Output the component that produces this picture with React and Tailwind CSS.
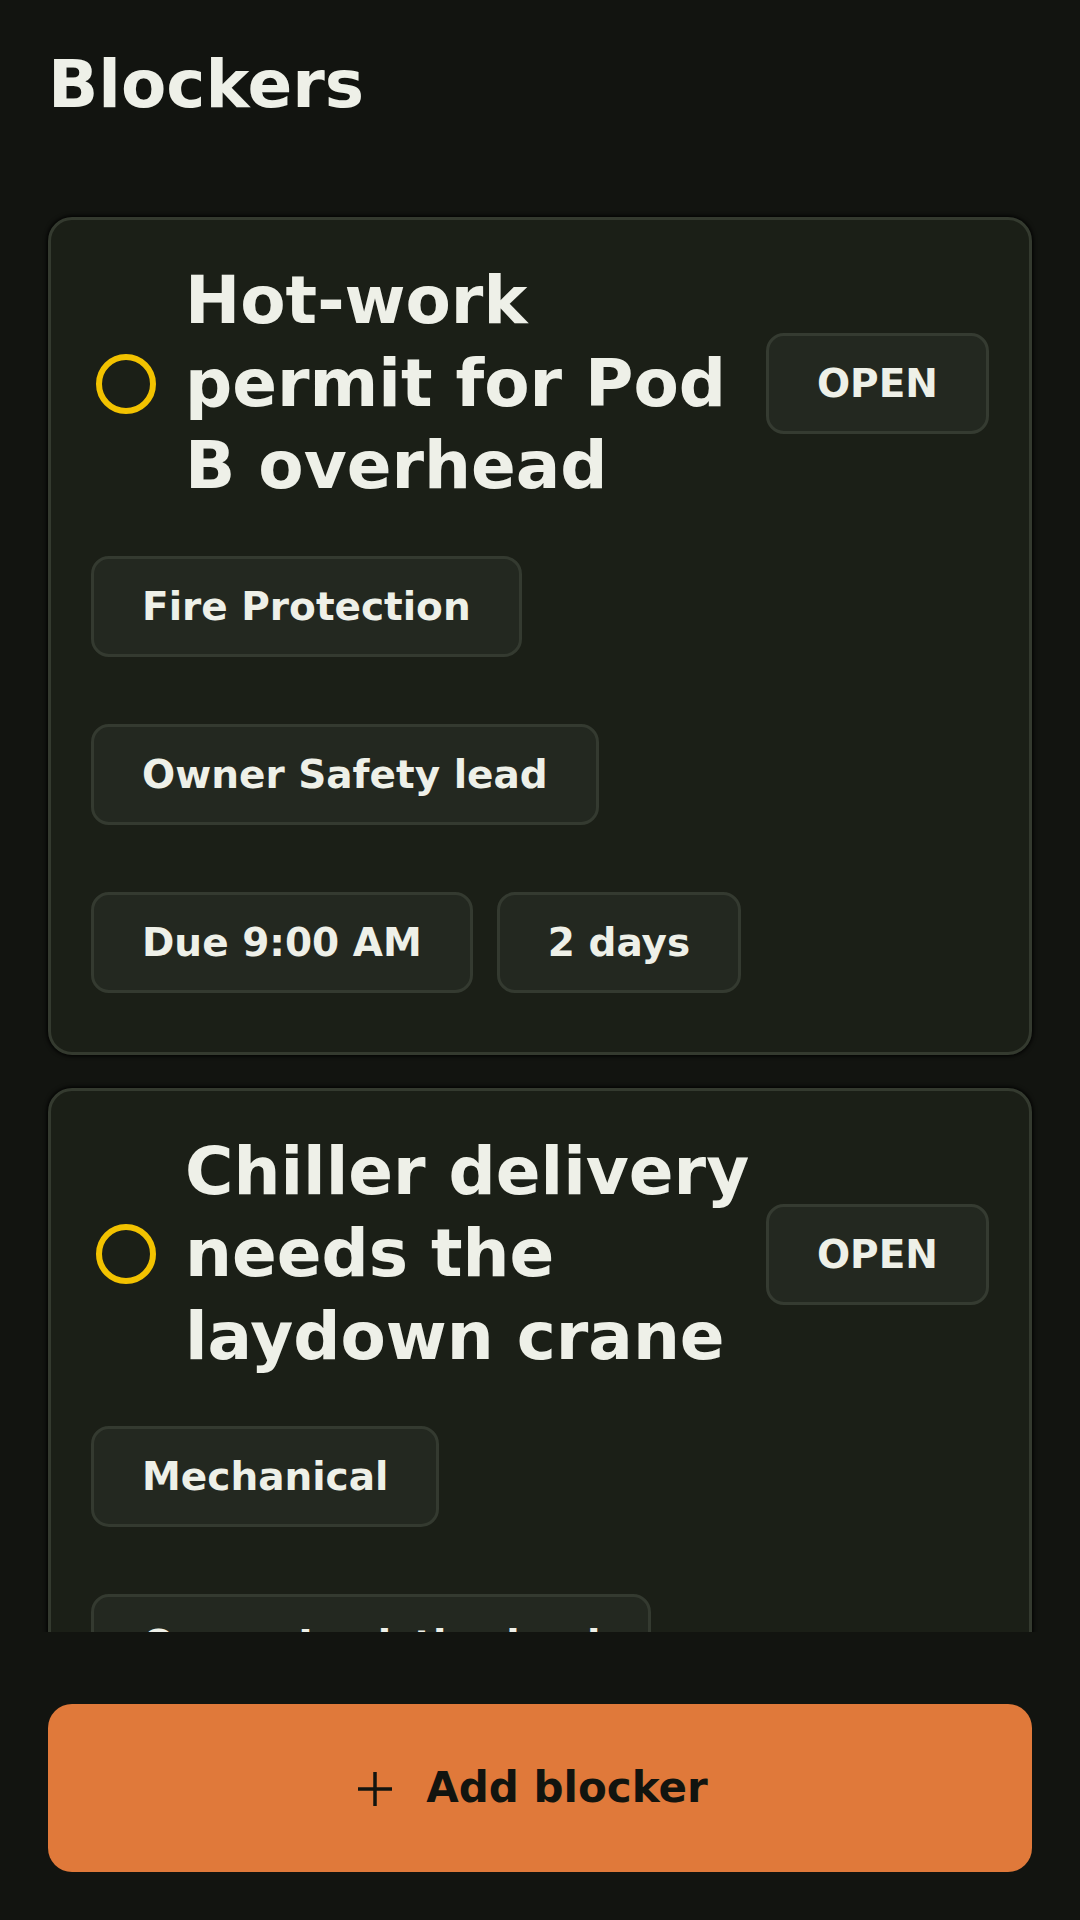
import React from 'react'

const blockers = [
    {
        id: 1,
        title: 'Hot-work permit for Pod B overhead',
        status: 'OPEN',
        rows: [['Fire Protection'], ['Owner Safety lead'], ['Due 9:00 AM', '2 days']],
    },
    {
        id: 2,
        title: 'Chiller delivery needs the laydown crane',
        status: 'OPEN',
        rows: [['Mechanical'], ['Owner Logistics lead'], ['Due 1:00 PM', 'Today']],
    },
]

const Chip = ({ children }) => (
    <span className="inline-flex items-center rounded-[18px] border-[3px] border-[#343a30] bg-[#232820] px-[48px] py-[25px] text-[39px] font-bold leading-[45px] text-[#eef0e8]">
        {children}
    </span>
)

const BlockerCard = ({ item }) => (
    <div className="flex-none rounded-[24px] border-[3px] border-[#343a2f] bg-[#1b1f17] px-[40px] pt-[40px] pb-[59px] shadow-[0_0_4px_1px_rgba(0,0,0,1)]">
        <div className="flex items-center">
            <div className="flex w-[70px] flex-none justify-center">
                <div className="h-[60px] w-[60px] rounded-full border-[6px] border-[#f2c200]" />
            </div>
            <h2 className="ml-[24px] min-w-0 flex-1 text-[66px] font-bold leading-[1.25] text-[#eef0e8]">
                {item.title}
            </h2>
            <span className="ml-[12px] flex-none rounded-[18px] border-[3px] border-[#353b31] bg-[#232820] px-[48px] py-[25px] text-[39px] font-bold leading-[45px] text-[#eef0e8]">
                {item.status}
            </span>
        </div>
        <div className="mt-[48px] flex flex-col gap-[67px]">
            {item.rows.map((row, i) => (
                <div key={i} className="flex gap-[24px]">
                    {row.map((label) => (
                        <Chip key={label}>{label}</Chip>
                    ))}
                </div>
            ))}
        </div>
    </div>
)

const App = () => {
    return (
        <div className="flex h-[1920px] w-[1080px] flex-col overflow-hidden bg-[#121410] font-['DejaVu_Sans',sans-serif]">
            <header className="h-[211px] flex-none px-[48px] pt-[44px]">
                <h1 className="text-[66px] font-bold leading-[1.25] text-[#eef0e8]">Blockers</h1>
            </header>

            <main className="flex min-h-0 flex-1 flex-col gap-[33px] overflow-hidden px-[48px] pt-[6px]">
                {blockers.map((item) => (
                    <BlockerCard key={item.id} item={item} />
                ))}
            </main>

            <footer className="flex-none px-[48px] pt-[72px] pb-[48px]">
                <button className="flex h-[168px] w-full items-center justify-center gap-[34px] rounded-[24px] bg-[#e0793a] pr-[14px] text-[42px] font-bold text-[#12140f]">
                    <svg width="34" height="34" viewBox="0 0 34 34" className="mt-[2px]">
                        <path d="M17 0v34M0 17h34" stroke="#12140f" strokeWidth="3.5" />
                    </svg>
                    <span className="leading-[50px]">Add blocker</span>
                </button>
            </footer>
        </div>
    )
}

export default App
